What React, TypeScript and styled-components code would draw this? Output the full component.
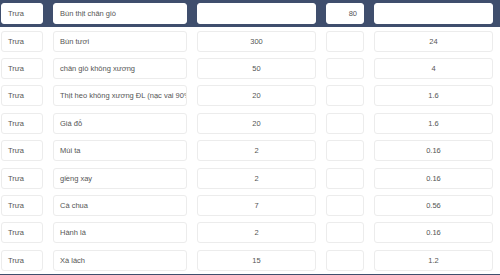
import React from "react";
import styled, { createGlobalStyle } from "styled-components";

const Global = createGlobalStyle`
  html, body { margin: 0; padding: 0; background: #ffffff; }
  body { font-family: "Liberation Sans", Arial, sans-serif; width: 500px; height: 275px; overflow: hidden; }
`;

const Table = styled.div`
  width: 500px;
  display: flex;
  flex-direction: column;
  border-bottom: 2px solid #3f4e6d;
`;

const Row = styled.div<{ $head?: boolean }>`
  display: grid;
  grid-template-columns: 42px 134px 119px 38px 119px;
  column-gap: 10px;
  align-items: center;
  height: 27.4px;
  padding-left: 1px;
  background: ${(p) => (p.$head ? "#3f4e6d" : "#ffffff")};
`;

const Field = styled.div<{ $align?: "left" | "center" | "right"; $head?: boolean }>`
  box-sizing: border-box;
  height: ${(p) => (p.$head ? "21px" : "21px")};
  border: 1px solid ${(p) => (p.$head ? "#ffffff" : "#ececec")};
  border-radius: 3px;
  background: #ffffff;
  display: flex;
  align-items: center;
  justify-content: ${(p) =>
    p.$align === "center" ? "center" : p.$align === "right" ? "flex-end" : "flex-start"};
  padding: 0 ${(p) => (p.$align === "left" ? "0 0 6px" : "6px")};
  padding-left: ${(p) => (p.$align === "left" ? "6px" : "6px")};
  font-size: 7.5px;
  color: #555555;
  white-space: nowrap;
  overflow: hidden;
`;

type Item = { meal: string; name: string; qty: string; kcal: string };

const items: Item[] = [
  { meal: "Trưa", name: "Bún tươi", qty: "300", kcal: "24" },
  { meal: "Trưa", name: "chân giò không xương", qty: "50", kcal: "4" },
  { meal: "Trưa", name: "Thịt heo không xương ĐL (nạc vai 90%/mỡ 10%)", qty: "20", kcal: "1.6" },
  { meal: "Trưa", name: "Giá đỗ", qty: "20", kcal: "1.6" },
  { meal: "Trưa", name: "Mùi ta", qty: "2", kcal: "0.16" },
  { meal: "Trưa", name: "giềng xay", qty: "2", kcal: "0.16" },
  { meal: "Trưa", name: "Cà chua", qty: "7", kcal: "0.56" },
  { meal: "Trưa", name: "Hành lá", qty: "2", kcal: "0.16" },
  { meal: "Trưa", name: "Xà lách", qty: "15", kcal: "1.2" },
];

export default function App() {
  return (
    <>
      <Global />
      <Table>
        <Row $head>
          <Field $head $align="left">Trưa</Field>
          <Field $head $align="left">Bún thịt chân giò</Field>
          <Field $head $align="center"></Field>
          <Field $head $align="right">80</Field>
          <Field $head $align="center"></Field>
        </Row>
        {items.map((it, i) => (
          <Row key={i}>
            <Field $align="left">{it.meal}</Field>
            <Field $align="left">{it.name}</Field>
            <Field $align="center">{it.qty}</Field>
            <Field $align="center"></Field>
            <Field $align="center">{it.kcal}</Field>
          </Row>
        ))}
      </Table>
    </>
  );
}
